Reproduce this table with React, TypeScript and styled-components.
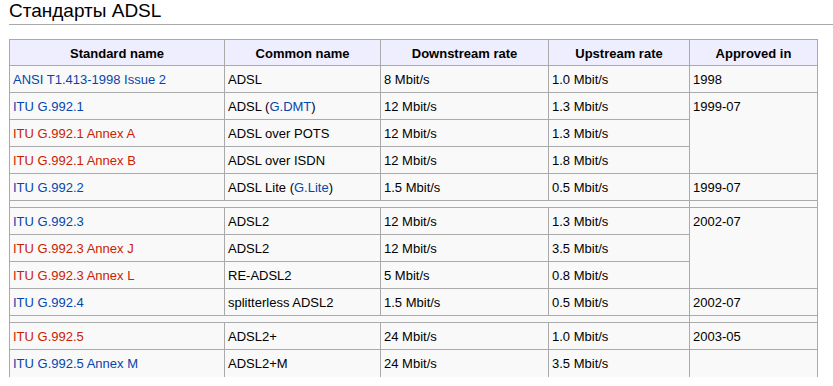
import styled, { createGlobalStyle } from "styled-components";

const GlobalStyle = createGlobalStyle`
  body {
    margin: 0;
    background: #ffffff;
    font-family: "Liberation Sans", Arial, sans-serif;
    color: #000000;
  }
`;

const Page = styled.div`
  padding-left: 9px;
`;

const Heading = styled.h2`
  margin: 0;
  padding: 0 0 2px 0;
  font-size: 19px;
  font-weight: normal;
  line-height: 22px;
  border-bottom: 1px solid #aaaaaa;
`;

const Table = styled.table`
  margin-top: 14px;
  width: 808px;
  table-layout: fixed;
  border-collapse: collapse;
  background: #f9f9f9;
  border: 1px solid #aaaaaa;
  border-bottom: none;
  font-size: 13px;
  line-height: 15px;
`;

const Col = styled.col<{ $w: number }>`
  width: ${(p) => p.$w}px;
`;

const HeadCell = styled.th`
  height: 26px;
  box-sizing: border-box;
  padding: 6px 3px 4px;
  border: 1px solid #aaaaaa;
  background: #eeeeff;
  font-weight: bold;
  text-align: center;
  vertical-align: top;
`;

const Cell = styled.td<{ $last?: boolean }>`
  height: 27px;
  box-sizing: border-box;
  padding: 6px 3px 4px;
  border: 1px solid #aaaaaa;
  border-bottom: ${(p) => (p.$last ? "none" : "1px solid #aaaaaa")};
  text-align: left;
  vertical-align: top;
  white-space: nowrap;
`;

const SpacerCell = styled.td`
  height: 6px;
  padding: 0;
  border: 1px solid #aaaaaa;
`;

const Link = styled.a<{ $missing?: boolean }>`
  color: ${(p) => (p.$missing ? "#cc2200" : "#0645ad")};
  text-decoration: none;
`;

type Row =
  | { spacer: true }
  | {
      spacer?: false;
      name: string;
      missing?: boolean;
      common: React.ReactNode;
      down: string;
      up: string;
      approved?: string;
      span?: number;
      skipApproved?: boolean;
    };

const rows: Row[] = [
  { name: "ANSI T1.413-1998 Issue 2", common: "ADSL", down: "8 Mbit/s", up: "1.0 Mbit/s", approved: "1998" },
  {
    name: "ITU G.992.1",
    common: (
      <>
        ADSL (<Link href="#">G.DMT</Link>)
      </>
    ),
    down: "12 Mbit/s",
    up: "1.3 Mbit/s",
    approved: "1999-07",
    span: 3,
  },
  { name: "ITU G.992.1 Annex A", missing: true, common: "ADSL over POTS", down: "12 Mbit/s", up: "1.3 Mbit/s", skipApproved: true },
  { name: "ITU G.992.1 Annex B", missing: true, common: "ADSL over ISDN", down: "12 Mbit/s", up: "1.8 Mbit/s", skipApproved: true },
  {
    name: "ITU G.992.2",
    common: (
      <>
        ADSL Lite (<Link href="#">G.Lite</Link>)
      </>
    ),
    down: "1.5 Mbit/s",
    up: "0.5 Mbit/s",
    approved: "1999-07",
  },
  { spacer: true },
  { name: "ITU G.992.3", common: "ADSL2", down: "12 Mbit/s", up: "1.3 Mbit/s", approved: "2002-07", span: 3 },
  { name: "ITU G.992.3 Annex J", missing: true, common: "ADSL2", down: "12 Mbit/s", up: "3.5 Mbit/s", skipApproved: true },
  { name: "ITU G.992.3 Annex L", missing: true, common: "RE-ADSL2", down: "5 Mbit/s", up: "0.8 Mbit/s", skipApproved: true },
  { name: "ITU G.992.4", common: "splitterless ADSL2", down: "1.5 Mbit/s", up: "0.5 Mbit/s", approved: "2002-07" },
  { spacer: true },
  { name: "ITU G.992.5", missing: true, common: "ADSL2+", down: "24 Mbit/s", up: "1.0 Mbit/s", approved: "2003-05" },
  { name: "ITU G.992.5 Annex M", common: "ADSL2+M", down: "24 Mbit/s", up: "3.5 Mbit/s", approved: "" },
];

const widths = [215, 156, 168, 141, 128];
const headers = ["Standard name", "Common name", "Downstream rate", "Upstream rate", "Approved in"];

export default function App() {
  return (
    <Page>
      <GlobalStyle />
      <Heading>Стандарты ADSL</Heading>
      <Table>
        <colgroup>
          {widths.map((w, i) => (
            <Col key={i} $w={w} />
          ))}
        </colgroup>
        <thead>
          <tr>
            {headers.map((h) => (
              <HeadCell key={h}>{h}</HeadCell>
            ))}
          </tr>
        </thead>
        <tbody>
          {rows.map((r, i) => {
            if (r.spacer) {
              return (
                <tr key={i}>
                  <SpacerCell colSpan={4} />
                  <SpacerCell />
                </tr>
              );
            }
            const last = i === rows.length - 1;
            return (
              <tr key={i}>
                <Cell $last={last}>
                  <Link href="#" $missing={r.missing}>
                    {r.name}
                  </Link>
                </Cell>
                <Cell $last={last}>{r.common}</Cell>
                <Cell $last={last}>{r.down}</Cell>
                <Cell $last={last}>{r.up}</Cell>
                {!r.skipApproved && (
                  <Cell $last={last} rowSpan={r.span}>
                    {r.approved}
                  </Cell>
                )}
              </tr>
            );
          })}
        </tbody>
      </Table>
    </Page>
  );
}
